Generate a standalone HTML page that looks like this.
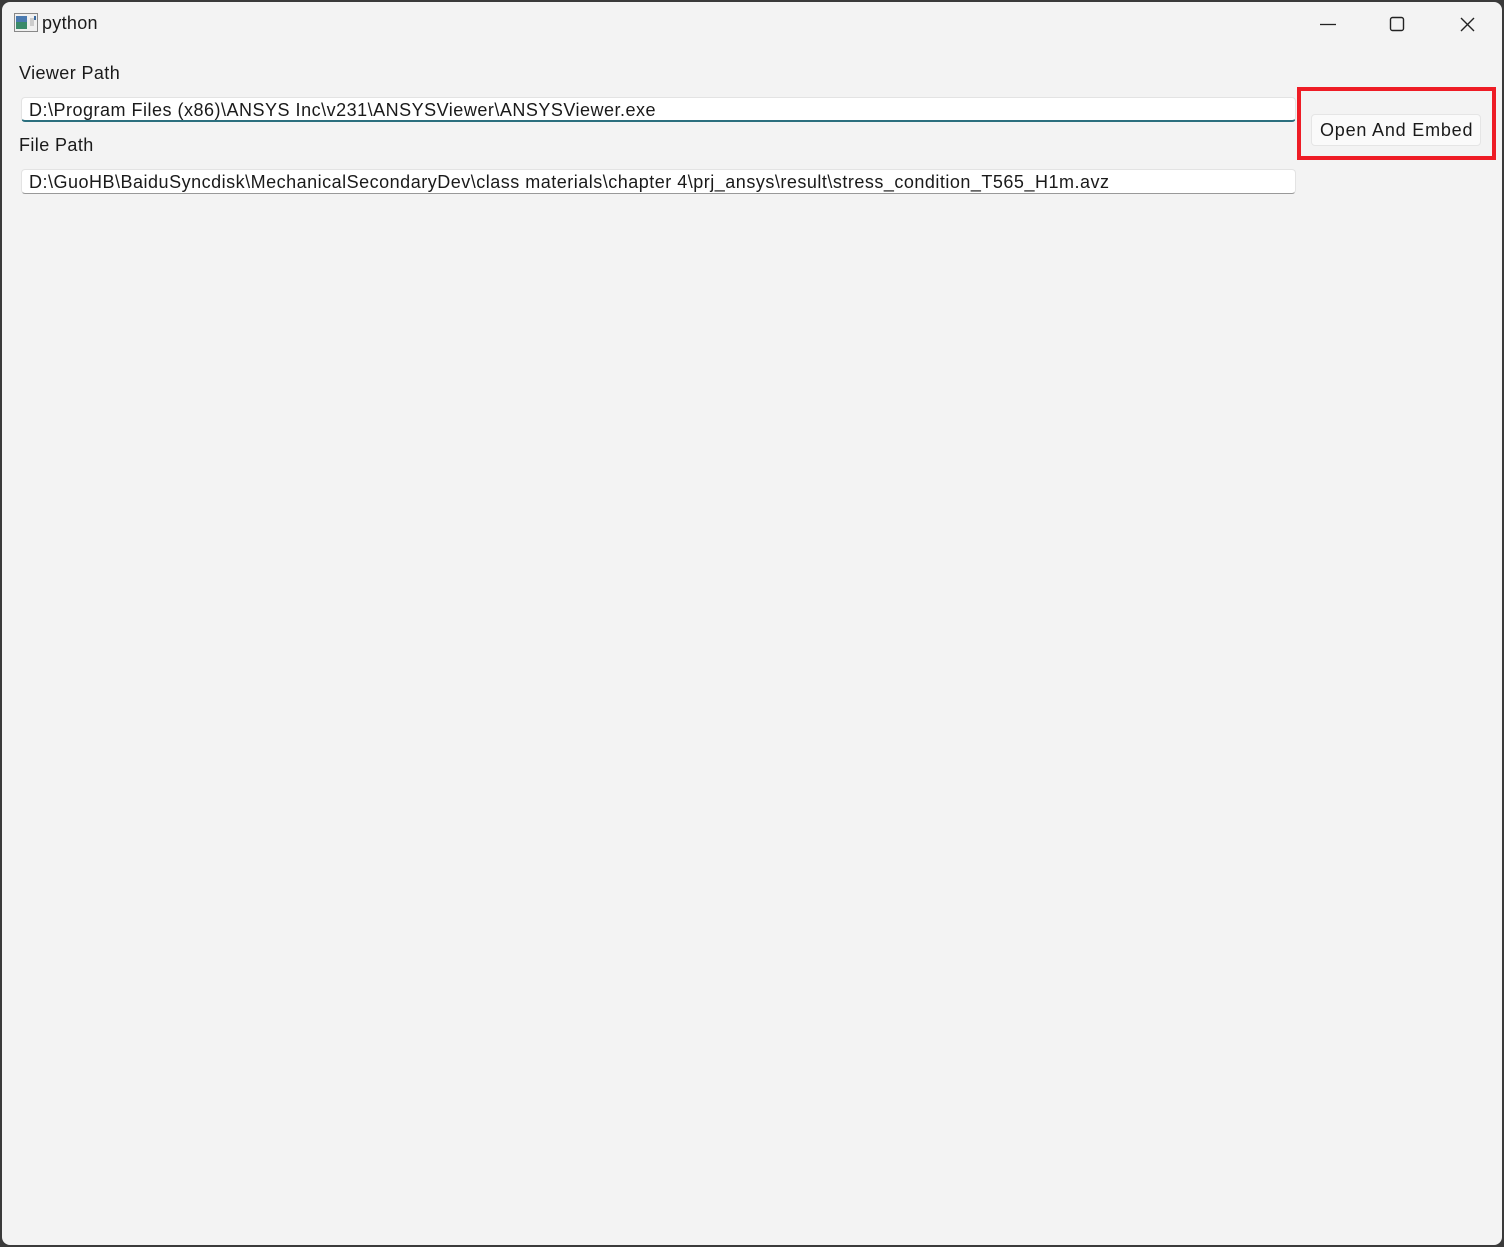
<!DOCTYPE html>
<html><head><meta charset="utf-8"><style>
html,body{margin:0;padding:0;width:1504px;height:1247px;overflow:hidden;background:#3a3a3a;}
.win{position:absolute;left:2px;top:2px;width:1500px;height:1243px;background:#f3f3f3;border-radius:8px;font-family:"Liberation Sans",sans-serif;color:#1a1a1a;}
.t{position:absolute;font-size:18px;white-space:nowrap;}
.inp{position:absolute;left:19px;width:1275px;height:25px;background:#fff;border:1px solid #e3e3e3;border-radius:4px;box-sizing:border-box;}
.inp span{position:absolute;left:7px;top:2px;font-size:18px;white-space:nowrap;letter-spacing:0.5px;}
</style></head><body>
<div class="win">
<svg style="position:absolute;left:12px;top:11px" width="24" height="19" viewBox="0 0 24 19"><rect x="0.5" y="0.5" width="23" height="18" fill="#f0f0f0" stroke="#888"/><rect x="2" y="3" width="11" height="13" fill="#3a8a6a"/><rect x="2" y="3" width="11" height="6" fill="#4a7ab0"/><rect x="16" y="5" width="4" height="8" fill="#ccc"/><rect x="20" y="3" width="2" height="4" fill="#3a6aa0"/></svg>
<div class="t" style="left:40px;top:11px;font-size:18px;letter-spacing:0.3px">python</div>
<svg style="position:absolute;left:1310px;top:12px" width="180" height="20"><line x1="8" y1="10.5" x2="24" y2="10.5" stroke="#222" stroke-width="1.3"/><rect x="78.5" y="3.5" width="13" height="13" rx="2" fill="none" stroke="#222" stroke-width="1.4"/><path d="M149 4 L162 17 M162 4 L149 17" stroke="#222" stroke-width="1.4"/></svg>
<div class="t" style="left:17px;top:61px;letter-spacing:0.4px">Viewer Path</div>
<div class="inp" style="top:95px;border-bottom:2px solid #2b6f7e"><span>D:\Program Files (x86)\ANSYS Inc\v231\ANSYSViewer\ANSYSViewer.exe</span></div>
<div class="t" style="left:17px;top:133px;letter-spacing:0.4px">File Path</div>
<div class="inp" style="top:167px;border-bottom:1px solid #999"><span>D:\GuoHB\BaiduSyncdisk\MechanicalSecondaryDev\class materials\chapter 4\prj_ansys\result\stress_condition_T565_H1m.avz</span></div>
<div style="position:absolute;left:1295px;top:85px;width:199px;height:73px;border:4px solid #ee1c25;box-sizing:border-box"></div>
<div style="position:absolute;left:1309px;top:112px;width:170px;height:32px;background:#fafafa;border:1px solid #e5e5e5;border-radius:4px;box-sizing:border-box"><div class="t" style="left:8px;top:5px;letter-spacing:0.8px">Open And Embed</div></div>
</div>
</body></html>
